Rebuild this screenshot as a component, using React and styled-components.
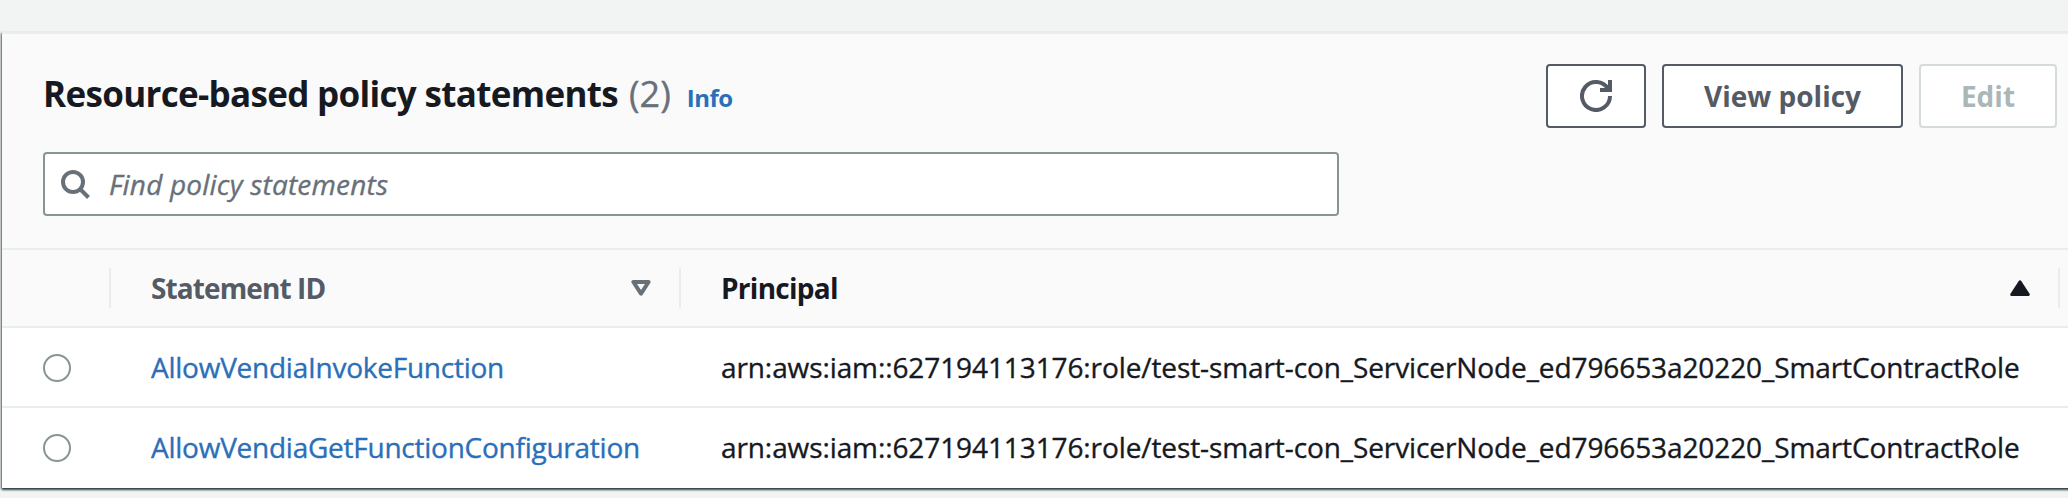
import React from 'react';
import styled, { createGlobalStyle } from 'styled-components';

const Global = createGlobalStyle`
  *, *::before, *::after { box-sizing: border-box; }
  body { margin: 0; background: #f2f4f3; font-family: "Open Sans", "Noto Sans", sans-serif; font-size: 28px; color: #16191f; }
`;

const Page = styled.div`
  height: 498px;
  padding: 32px 0 0 2px;
  overflow: hidden;
`;

const Panel = styled.section`
  width: 2100px;
  height: 456px;
  display: flex;
  flex-direction: column;
  background: #fff;
  border-top: 2px solid #eaeded;
  box-shadow: 0 2px 2px 0 rgba(0, 28, 36, 0.7), -1px 1px 2px 0 rgba(0, 28, 36, 0.5);
`;

const Header = styled.header`
  height: 216px;
  padding: 30px 0 0 41px;
  background: #fafafa;
  border-bottom: 2px solid #eaeded;
`;

const TitleRow = styled.div`
  display: flex;
  justify-content: space-between;
  width: 2014px;
  height: 64px;
`;

const Text = styled.span`
  white-space: pre;
  letter-spacing: ${p => p.$ls || 0}px;
  -webkit-text-stroke: ${p => (p.$firm ? 0.35 : 0)}px currentColor;
`;

const Title = styled.h2`
  margin: 0;
  display: flex;
  align-items: baseline;
  font-size: 35px;
  line-height: 60px;
`;

const Count = styled(Text)`
  margin-left: 11px;
  font-size: 36px;
  font-weight: 400;
  color: #687078;
`;

const Info = styled(Text).attrs({ as: 'a' })`
  margin-left: 16px;
  font-size: 24px;
  color: #2a6fb8;
`;

const Actions = styled.div`
  display: flex;
  gap: 16px;
`;

const Button = styled.button`
  width: ${p => p.$w}px;
  height: 64px;
  padding: 0;
  display: flex;
  align-items: center;
  justify-content: center;
  background: #fff;
  border: 2px solid ${p => (p.disabled ? '#d5dbdb' : '#545b64')};
  border-radius: 4px;
  color: ${p => (p.disabled ? '#aab7b8' : '#545b64')};
  font: 700 28px/60px "Open Sans", "Noto Sans", sans-serif;
`;

const Search = styled.div`
  margin-top: 24px;
  width: 1296px;
  height: 64px;
  display: flex;
  align-items: center;
  padding-left: 14px;
  gap: 18px;
  background: #fff;
  border: 2px solid #879596;
  border-radius: 4px;
  color: #687078;
  font-style: italic;
`;

const Row = styled.div`
  height: ${p => p.$h}px;
  display: grid;
  grid-template-columns: 109px 570px 1379px 1fr;
  align-items: center;
  background: ${p => (p.$head ? '#fafafa' : '#fff')};
  border-bottom: 2px solid ${p => (p.$last ? 'transparent' : '#eaeded')};
`;

const Cell = styled.div`
  padding-left: ${p => p.$pl || 40}px;
  color: ${p => p.$color || '#16191f'};
`;

const HeadCell = styled(Cell)`
  height: 40px;
  display: flex;
  align-items: center;
  justify-content: space-between;
  padding-right: ${p => p.$pr || 0}px;
  border-right: 2px solid #eaeded;
  font-weight: 700;
`;

const Radio = styled.span`
  display: block;
  width: 28px;
  height: 28px;
  margin-top: 2px;
  border: 2px solid #879596;
  border-radius: 50%;
  background: #fff;
`;

const statements = ['AllowVendiaInvokeFunction', 'AllowVendiaGetFunctionConfiguration'];
const principal = 'arn:aws:iam::627194113176:role/test-smart-con_ServicerNode_ed796653a20220_SmartContractRole';

const RefreshIcon = () => (
  <svg width="32" height="32" viewBox="0 0 16 16" fill="none" stroke="currentColor" strokeWidth="2">
    <path d="M10 5h5V0" />
    <path d="M15 8a7 7 0 1 1-1-3.6" />
  </svg>
);
const SearchIcon = () => (
  <svg width="32" height="32" viewBox="0 0 32 32" fill="none" stroke="currentColor" strokeWidth="4">
    <circle cx="14" cy="14" r="10" /><path d="M21 21L29.5 29.5" />
  </svg>
);

export default function App() {
  return (
    <Page>
      <Global />
      <Panel>
        <Header>
          <TitleRow>
            <Title>
              <Text $ls={-0.68}>Resource-based policy statements</Text>
              <Count $firm>(2)</Count>
              <Info $ls={-0.5}>Info</Info>
            </Title>
            <Actions>
              <Button $w={100} aria-label="Refresh"><RefreshIcon /></Button>
              <Button $w={241}><Text>View policy</Text></Button>
              <Button $w={138} disabled><Text>Edit</Text></Button>
            </Actions>
          </TitleRow>
          <Search><SearchIcon /><Text $firm $ls={0.19}>Find policy statements</Text></Search>
        </Header>
        <Row $h={78} $head>
          <HeadCell />
          <HeadCell $color="#545b64" $pr={28}>
            <Text $ls={-0.9}>Statement ID</Text>
            <svg width="20" height="16" viewBox="0 0 20 16" fill="none" stroke="#687078" strokeWidth="4" strokeLinejoin="round"><path d="M2.4 2H17.6L10 13.6Z" /></svg>
          </HeadCell>
          <HeadCell $pr={28}>
            <Text $ls={-0.73}>Principal</Text>
            <svg width="20" height="16" viewBox="0 0 20 16" fill="#16191f" stroke="#16191f" strokeWidth="3" strokeLinejoin="round"><path d="M10 1.8L18.3 14.5H1.7Z" /></svg>
          </HeadCell>
        </Row>
        {statements.map((id, i) => (
          <Row key={id} $h={80} $last={i === 1}>
            <Cell $pl={41}><Radio /></Cell>
            <Cell $color="#2a6fb8"><Text $firm $ls={-0.25}>{id}</Text></Cell>
            <Cell><Text $firm $ls={-0.1}>{principal}</Text></Cell>
          </Row>
        ))}
      </Panel>
    </Page>
  );
}
